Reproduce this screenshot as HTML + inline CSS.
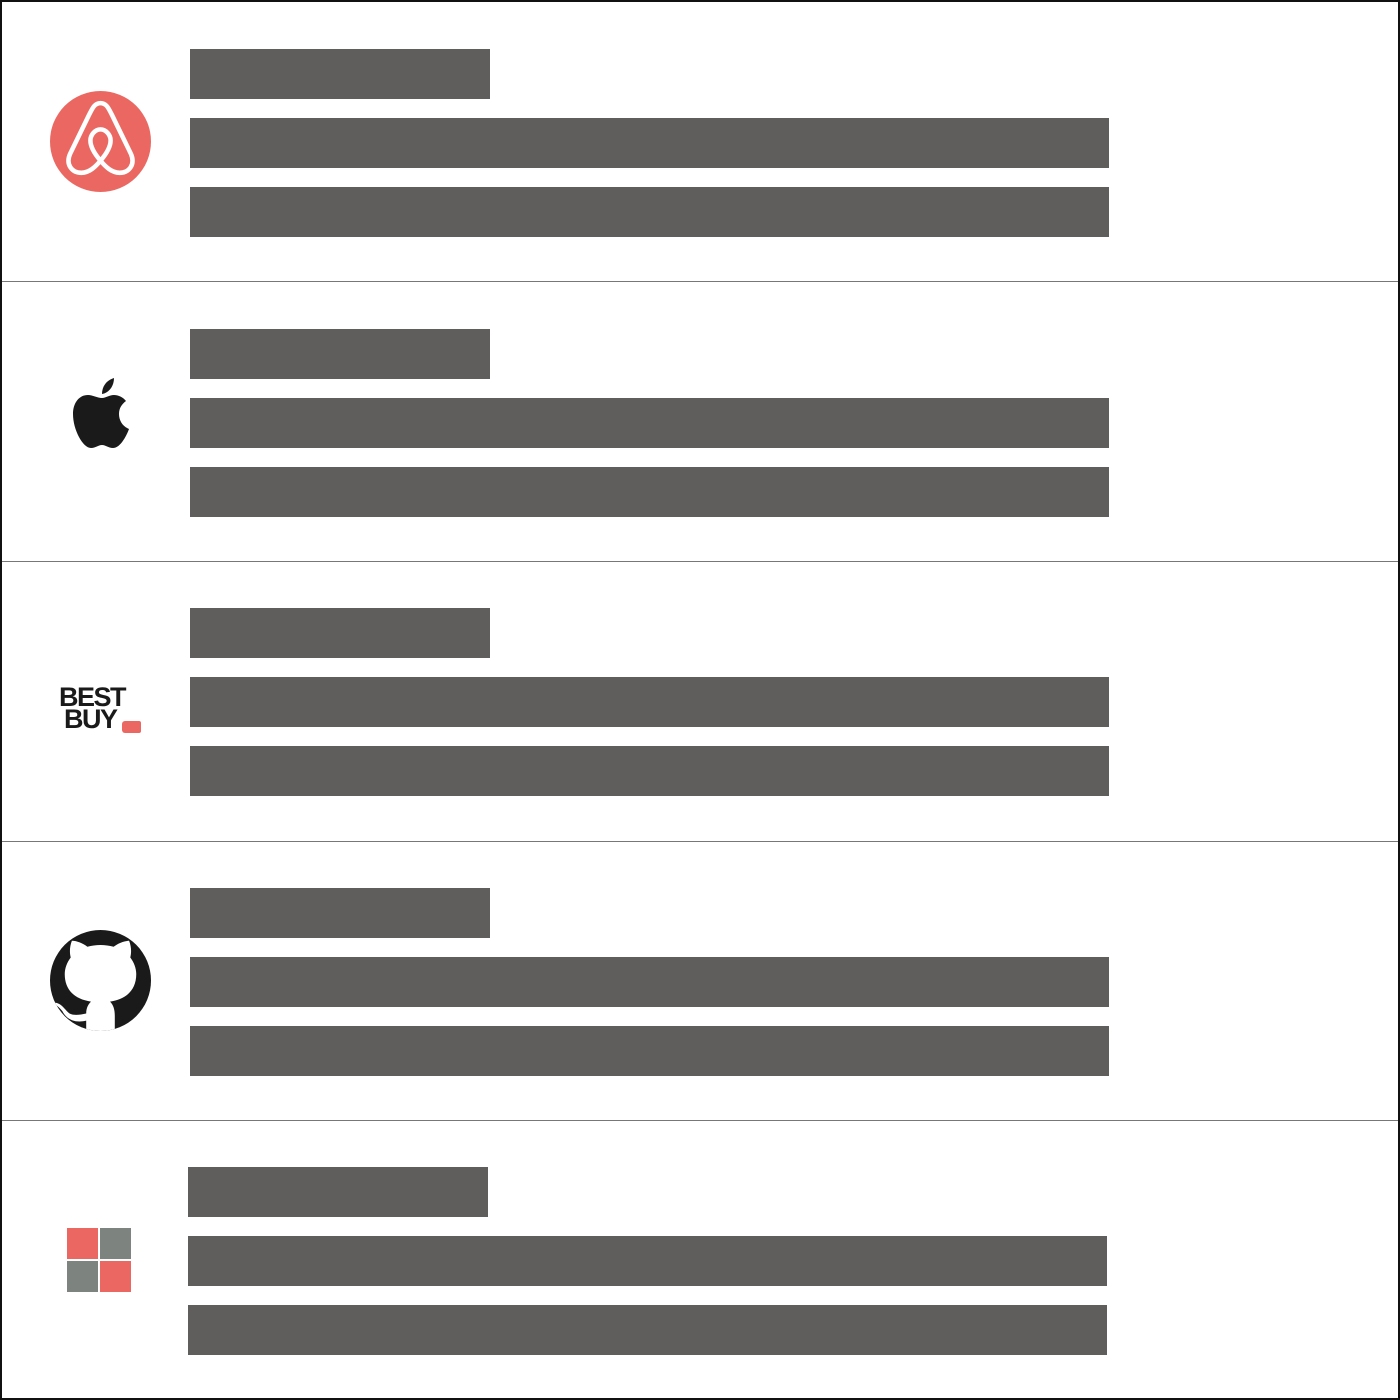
<!DOCTYPE html>
<html><head><meta charset="utf-8"><style>
html,body{margin:0;padding:0;background:#fff;}
body{width:1400px;height:1400px;position:relative;overflow:hidden;font-family:"Liberation Sans",sans-serif;}
.frame{position:absolute;left:0;top:0;width:1396px;height:1396px;border:2px solid #111;}
.div{position:absolute;left:2px;width:1396px;height:1px;background:#777;}
.b{position:absolute;background:#5f5e5c;height:50px;}
</style></head><body>
<div class="frame"></div>
<div class="div" style="top:281px"></div>
<div class="div" style="top:561px"></div>
<div class="div" style="top:841px"></div>
<div class="div" style="top:1120px"></div>

<div class="b" style="left:190px;top:49px;width:300px"></div>
<div class="b" style="left:190px;top:118px;width:919px"></div>
<div class="b" style="left:190px;top:187px;width:919px"></div>

<div class="b" style="left:190px;top:329px;width:300px"></div>
<div class="b" style="left:190px;top:398px;width:919px"></div>
<div class="b" style="left:190px;top:467px;width:919px"></div>

<div class="b" style="left:190px;top:608px;width:300px"></div>
<div class="b" style="left:190px;top:677px;width:919px"></div>
<div class="b" style="left:190px;top:746px;width:919px"></div>

<div class="b" style="left:190px;top:888px;width:300px"></div>
<div class="b" style="left:190px;top:957px;width:919px"></div>
<div class="b" style="left:190px;top:1026px;width:919px"></div>

<div class="b" style="left:188px;top:1167px;width:300px"></div>
<div class="b" style="left:188px;top:1236px;width:919px"></div>
<div class="b" style="left:188px;top:1305px;width:919px"></div>

<!-- airbnb -->
<svg style="position:absolute;left:50px;top:91px" width="101" height="101" viewBox="0 0 100 100">
<circle cx="50" cy="50" r="50" fill="#eb6862"/>
<path d="M50 12 C44 12 42 17 38 25 L20 62 C15 73 22 81 31 81 C39 81 45 75 50 69 C55 75 61 81 69 81 C78 81 85 73 80 62 L62 25 C58 17 56 12 50 12 Z M50 69 C44 62 40 55 40 49 C40 43 45 38 50 38 C55 38 60 43 60 49 C60 55 56 62 50 69 Z" fill="none" stroke="#fff" stroke-width="4.5" stroke-linejoin="round"/>
</svg>

<!-- apple -->
<svg style="position:absolute;left:73px;top:378px" width="57" height="70" viewBox="0 0 57 70">
<path d="M29 16 C29 8 34 2 41 0 C41 8 36 15 29 16Z" fill="#1a1a1a"/>
<path d="M29 20 C24 20 20 17 15 17 C6 17 0 25 0 36 C0 52 10 70 18 70 C23 70 25 67 29 67 C33 67 35 70 40 70 C47 70 53 59 56 51 C49 48 46 42 46 36 C46 30 49 26 53 23 C50 19 45 17 41 17 C36 17 33 20 29 20Z" fill="#1a1a1a"/>
</svg>

<!-- best buy -->
<div style="position:absolute;left:59px;top:686px;font-weight:bold;font-size:27px;line-height:22px;color:#1a1a1a;letter-spacing:-1.5px;font-family:'Liberation Sans',sans-serif;">BEST<br><span style="margin-left:5px">BUY</span></div>
<div style="position:absolute;left:122px;top:721px;width:19px;height:12px;background:#eb6862;border-radius:3px 2px 2px 3px;"></div>

<!-- github -->
<svg style="position:absolute;left:50px;top:930px" width="101" height="101" viewBox="0 0 100 100">
<defs><clipPath id="c"><circle cx="50" cy="50" r="50"/></clipPath></defs>
<circle cx="50" cy="50" r="50" fill="#1a1a1a"/>
<g clip-path="url(#c)">
<path transform="translate(50 52) scale(1.18) translate(-50 -52)" d="M38 104 L38 84 C30 86 22 84 18 76 C14 71 11 70 9 69 C17 68 19 74 24 78 C28 80 33 79 38 78 C38 73 40 70 42 68 C28 66 20 58 20 45 C20 40 22 35 25 31 C24 27 24 22 26 17 C30 17 35 19 39 22 C46 20 54 20 61 22 C65 19 70 17 74 17 C76 22 76 27 75 31 C78 35 80 40 80 45 C80 58 72 66 58 68 C61 71 62 75 62 80 L62 104 Z" fill="#fff"/>
</g>
</svg>

<!-- squares -->
<div style="position:absolute;left:67px;top:1228px;width:31px;height:31px;background:#eb6862"></div>
<div style="position:absolute;left:100px;top:1228px;width:31px;height:31px;background:#7d8480"></div>
<div style="position:absolute;left:67px;top:1261px;width:31px;height:31px;background:#7d8480"></div>
<div style="position:absolute;left:100px;top:1261px;width:31px;height:31px;background:#eb6862"></div>
</body></html>
